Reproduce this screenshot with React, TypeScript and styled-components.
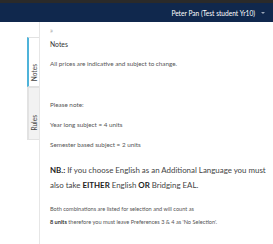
import React, { useState } from "react";
import styled, { createGlobalStyle } from "styled-components";

const GlobalStyle = createGlobalStyle`
  html, body {
    margin: 0;
    padding: 0;
    background: #ffffff;
    font-family: Lato, "Open Sans", sans-serif;
  }
`;

const TABS = ["Notes", "Rules"];

function App() {
  const [tab, setTab] = useState("Notes");

  return (
    <>
      <GlobalStyle />
      <TopStrip />
      <NavBar>
        <UserMenu>
          Peter Pan (Test student Yr10)
          <Caret />
        </UserMenu>
      </NavBar>
      <Body>
        <TabList>
          {TABS.map((name) => (
            <Tab key={name} $active={tab === name} onClick={() => setTab(name)}>
              <TabLabel>{name}</TabLabel>
            </Tab>
          ))}
        </TabList>
        <Panel>
          <Collapse>»</Collapse>
          <PanelTitle>Notes</PanelTitle>
          <Para>All prices are indicative and subject to change.</Para>
          <Para $gap={32}>Please note:</Para>
          <Para>Year long subject = 4 units</Para>
          <Para>Semester based subject = 2 units</Para>
          <Callout>
            <b>NB.:</b> If you choose English as an Additional Language you must
            also take <b>EITHER</b> English <b>OR</b> Bridging EAL.
          </Callout>
          <SmallPara>
            Both combinations are listed for selection and will count as
            <br />
            <b>8 units</b> therefore you must leave Preferences 3 &amp; 4 as 'No Selection'.
          </SmallPara>
        </Panel>
      </Body>
    </>
  );
}

const TopStrip = styled.div`
  height: 3px;
  background-color: #2a2a2a;
`;

const NavBar = styled.header`
  display: flex;
  align-items: center;
  justify-content: flex-end;
  height: 19px;
  padding-right: 8px;
  background-color: #10284d;
`;

const UserMenu = styled.div`
  display: flex;
  align-items: center;
  gap: 6px;
  color: #ffffff;
  font-size: 6.6px;
`;

const Caret = styled.span`
  width: 0;
  height: 0;
  border-left: 2.5px solid transparent;
  border-right: 2.5px solid transparent;
  border-top: 2.5px solid #9aa6b8;
`;

const Body = styled.main`
  display: flex;
  padding-left: 27px;
`;

const TabList = styled.nav`
  display: flex;
  flex-direction: column;
  width: 12px;
  padding-top: 15px;
`;

const Tab = styled.button<{ $active: boolean }>`
  box-sizing: border-box;
  display: flex;
  align-items: center;
  justify-content: flex-end;
  flex-direction: column;
  height: ${(p) => (p.$active ? 50 : 53)}px;
  padding: 0 0 ${(p) => (p.$active ? 5 : 8)}px;
  border: 1px solid #e2e2e2;
  border-right: none;
  border-left: 2px solid ${(p) => (p.$active ? "#4fb3d9" : "#e2e2e2")};
  background-color: ${(p) => (p.$active ? "#ffffff" : "#f2f2f2")};
  cursor: pointer;
`;

const TabLabel = styled.span`
  writing-mode: vertical-rl;
  transform: rotate(180deg);
  white-space: nowrap;
  color: #444444;
  font-family: Lato, sans-serif;
  font-size: 6.6px;
  line-height: 8px;
`;

const Panel = styled.section`
  flex: 1;
  min-height: 222px;
  padding: 4px 4px 0 10px;
  border-left: 1px solid #e6e6e6;
  color: #555555;
  font-size: 6.3px;
`;

const Collapse = styled.div`
  color: #9a9a9a;
  font-size: 7px;
  line-height: 8px;
`;

const PanelTitle = styled.h2`
  margin: 6px 0 0;
  color: #333333;
  font-size: 6.8px;
  font-weight: 400;
`;

const Para = styled.p<{ $gap?: number }>`
  margin: ${(p) => p.$gap ?? 11}px 0 0;
  line-height: 9px;
`;

const Callout = styled.p`
  margin: 14px 0 0;
  color: #444444;
  font-size: 7.9px;
  line-height: 15px;

  b {
    color: #222222;
  }
`;

const SmallPara = styled.p`
  margin: 9px 0 0;
  font-size: 5.6px;
  line-height: 13px;

  b {
    color: #333333;
  }
`;

export default App;
